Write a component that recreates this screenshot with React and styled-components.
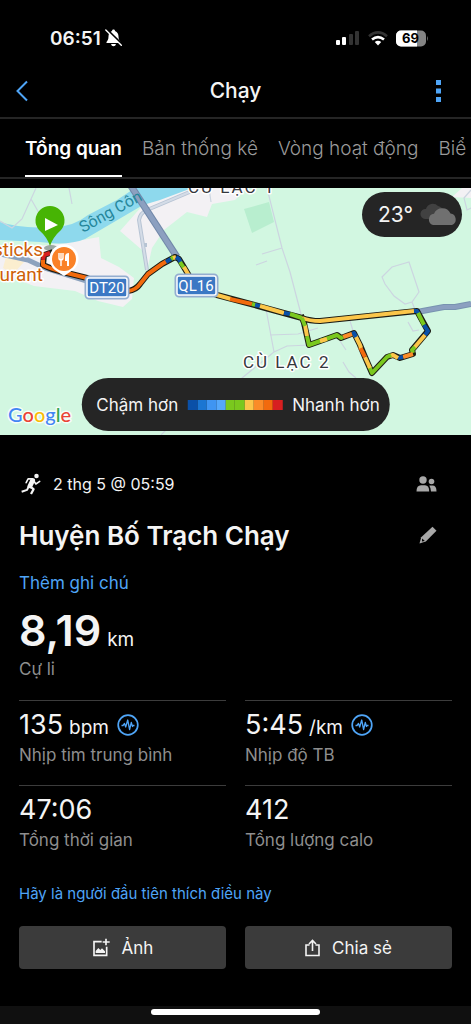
import { useState } from "react"
import styled, { createGlobalStyle } from "styled-components"

const GlobalStyle = createGlobalStyle`
  * {
    box-sizing: border-box;
  }
  body {
    margin: 0;
    background-color: #000;
    color: #f4f4f4;
    font-family: Inter, "Liberation Sans", sans-serif;
  }
  button {
    font-family: inherit;
    background: none;
    border: none;
    padding: 0;
    color: inherit;
    cursor: pointer;
  }
  h1, h2, p {
    margin: 0;
  }
  svg {
    display: block;
    flex-shrink: 0;
  }
`

const Screen = styled.div`
  display: flex;
  flex-direction: column;
  min-height: 100vh;
  overflow: hidden;
`

const StatusBar = styled.div`
  display: flex;
  justify-content: space-between;
  align-items: center;
  height: 64px;
  padding: 12px 42px 0 50px;
`

const Clock = styled.div`
  display: flex;
  align-items: center;
  gap: 4px;
  font-size: 19px;
  font-weight: 600;
`

const Signals = styled.div`
  display: flex;
  align-items: center;
  gap: 8px;
`

const Header = styled.header`
  display: grid;
  grid-template-columns: 44px 1fr 44px;
  align-items: center;
  height: 55px;
  border-bottom: 2px solid #252525;

  h1 {
    text-align: center;
    font-size: 21px;
    font-weight: 500;
  }
`

const IconButton = styled.button`
  display: flex;
  justify-content: ${(props) => props.$align || "center"};
  align-items: center;
  padding: ${(props) => props.$pad || "0"};
`

const Tabs = styled.nav`
  display: flex;
  gap: 20px;
  height: 60px;
  padding-left: 25px;
  margin-bottom: 9px;
  border-bottom: 2px solid #252525;
  overflow: hidden;
`

const Tab = styled.button`
  && {
    flex-shrink: 0;
    padding-top: 2px;
    font-size: 19px;
    white-space: nowrap;
    font-weight: ${(props) => (props.$active ? 600 : 300)};
    color: ${(props) => (props.$active ? "#fff" : "#9a9a9a")};
    border-bottom: 2px solid ${(props) => (props.$active ? "#fff" : "transparent")};
  }
`

const MapBox = styled.section`
  position: relative;
  height: 247px;
  background-color: #d2f7e1;

  > svg {
    width: 100%;
    height: 100%;
  }
`

const Weather = styled.div`
  position: absolute;
  top: 4px;
  right: 9px;
  display: flex;
  align-items: center;
  gap: 7px;
  height: 45px;
  padding: 0 4px 0 16px;
  border-radius: 23px;
  background-color: #252525;
  font-size: 21px;
`

const Legend = styled.div`
  position: absolute;
  bottom: 4px;
  left: 50%;
  transform: translateX(-50%);
  display: flex;
  align-items: center;
  gap: 10px;
  height: 53px;
  padding: 0 10px 0 15px;
  border-radius: 27px;
  background-color: #252525;
  font-size: 17px;
  white-space: nowrap;
`

const Scale = styled.div`
  display: flex;
  width: 94px;
  height: 10px;
`

const Step = styled.span`
  flex: 1;
  background-color: ${(props) => props.$color};
`

const Content = styled.main`
  padding: 34px 19px 37px;
`

const Row = styled.div`
  display: flex;
  align-items: center;
  justify-content: space-between;
  height: ${(props) => props.$height}px;
  padding-right: 15px;

  h2 {
    font-size: 26px;
    font-weight: 600;
  }
`

const DateLine = styled.div`
  display: flex;
  align-items: center;
  gap: 12px;
  padding-left: 2px;
  font-size: 16px;
`

const TextLink = styled.a`
  display: block;
  width: fit-content;
  font-size: ${(props) => props.$size}px;
  line-height: 24px;
  color: #4fa5f7;
  text-decoration: none;
`

const Distance = styled.div`
  display: flex;
  align-items: baseline;
  gap: 6px;
  margin-top: 9px;
  font-size: 43px;
  font-weight: 600;
  line-height: 52px;

  span {
    font-size: 19px;
    font-weight: 400;
    line-height: 1;
  }
`

const Label = styled.p`
  font-size: 17px;
  line-height: 26px;
  color: #8e8e8e;
`

const Stats = styled.div`
  display: grid;
  grid-template-columns: 1fr 1fr;
  column-gap: 19px;
  margin: 18px 0 12px;
`

const Stat = styled.div`
  height: 85px;
  padding-top: 6px;
  border-top: 1px solid #3c3c3c;
`

const Value = styled.div`
  display: flex;
  align-items: center;
  gap: 8px;
  line-height: 35px;

  p {
    display: flex;
    align-items: baseline;
    gap: 6px;
    font-size: 27px;
  }
  span {
    font-size: 19px;
    line-height: 1;
  }
`

const Actions = styled.div`
  display: grid;
  grid-template-columns: 1fr 1fr;
  column-gap: 19px;
  margin-top: 20px;
`

const ActionButton = styled.button`
  && {
    display: flex;
    justify-content: center;
    align-items: center;
    gap: 12px;
    height: 43px;
    border-radius: 4px;
    background-color: #3b3b3b;
    font-size: 17px;
  }
`

const HomeArea = styled.footer`
  display: flex;
  justify-content: center;
  height: 18px;
  margin-top: auto;
  padding-top: 3px;
  background-color: #101010;
`

const HomeBar = styled.div`
  width: 36%;
  height: 6px;
  border-radius: 3px;
  background-color: #fff;
`

const BLUE = "#4fa5f7"

const BellOff = () => (
  <svg width="17" height="18" viewBox="0 0 17 18">
    <path d="M8.500 .5C9.500 .5 10 1.200 10 2C12.500 3 13.500 5 13.500 7.500C13.500 10.500 14.500 11.500 15.500 13V14H1.500V13C2.500 11.500 3.500 10.500 3.500 7.500C3.500 5 4.500 3 7 2C7 1.200 7.500 .5 8.500 .5ZM6 15H11Q10.500 17.300 8.500 17.300Q6.500 17.300 6 15Z" fill="#fff" />
    <path d="M1.500 .2L17 15.400" stroke="#000" strokeWidth="2.200" />
    <path d="M.8 1L16.300 16.200" stroke="#fff" strokeWidth="1.400" strokeLinecap="round" />
  </svg>
)

const SignalBars = () => (
  <svg width="24" height="16" viewBox="0 0 24 16">
    <rect x="0" y="10" width="4" height="5" rx="1" fill="#fff" />
    <rect x="6" y="7" width="4" height="8" rx="1" fill="#fff" />
    <rect x="13" y="4" width="4" height="11" rx="1" fill="#333" />
    <rect x="19" y="1" width="4" height="14" rx="1" fill="#333" />
  </svg>
)

const Wifi = () => (
  <svg width="20" height="15" viewBox="0 0 20 15" fill="none" strokeWidth="2.600">
    <path d="M1 5.200Q10 -2.400 19 5.200" stroke="#333" />
    <path d="M4 8.600Q10 3.600 16 8.600" stroke="#fff" />
    <path d="M6.800 11Q10 8.600 13.200 11L10 14.400Z" fill="#fff" />
  </svg>
)

const Battery = () => (
  <svg width="33" height="17" viewBox="0 0 33 17">
    <defs>
      <clipPath id="cell">
        <rect width="30" height="16" y=".5" rx="5" />
      </clipPath>
    </defs>
    <g clipPath="url(#cell)">
      <rect width="30" height="17" fill="#848484" />
      <rect width="21" height="17" fill="#fff" />
    </g>
    <path d="M31 6Q33 8.500 31 11Z" fill="#666" />
    <text x="14.500" y="13.200" fontSize="13" fontWeight="700" textAnchor="middle" fill="#000">69</text>
  </svg>
)

const Runner = () => (
  <svg width="20" height="22" viewBox="64 40 62 66" fill="none" stroke="#f4f4f4" strokeLinejoin="round">
    <circle cx="112" cy="48" r="7" fill="#f4f4f4" stroke="none" />
    <path d="M100 62L92 79" strokeWidth="15" strokeLinecap="round" />
    <path d="M99 57L86 57L80 69" strokeWidth="5" strokeLinecap="round" />
    <path d="M103 62L110 73L122 65" strokeWidth="5" strokeLinecap="round" />
    <path d="M88 80L83 91L66 97" strokeWidth="6" />
    <path d="M91 80L103 89L95 104" strokeWidth="7" />
  </svg>
)

const People = () => (
  <svg width="21" height="16" viewBox="0 0 21 16" fill="#a8a8a8">
    <circle cx="7" cy="4" r="3.700" />
    <path d="M.5 15.500Q.5 9.200 5 9.200H9Q13.200 9.200 13.200 15.500Z" />
    <circle cx="15.500" cy="5.500" r="2.800" />
    <path d="M13.300 9.600Q14.800 12 15 15.500H20.500Q20.500 9.600 16.500 9.600Z" />
  </svg>
)

const Pencil = () => (
  <svg width="18" height="18" viewBox="0 0 18 18">
    <path d="M.5 17.500L2.200 11.200L13.500 .7L17.500 4.700L6.800 15.600Z" fill="#a8a8a8" />
    <path d="M3.200 12.400L5.800 15L2.900 15.600Z" fill="#000" />
  </svg>
)

const Pulse = () => (
  <svg width="22" height="22" viewBox="0 0 22 22" fill="none" stroke={BLUE} strokeLinejoin="round">
    <circle cx="11" cy="11" r="9.800" strokeWidth="1.700" />
    <path d="M4.500 11.500H6L7.500 9.500L8.700 13L10.700 6L12.600 15.500L14.300 8.500L15.500 12.500L16 11.500H17.500" strokeWidth="1.300" />
  </svg>
)

const AddPhoto = () => (
  <svg width="18" height="19" viewBox="280 204 54 57" fill="none" stroke="#f4f4f4" strokeWidth="5">
    <path d="M309 215H286V256H324V230" />
    <path d="M322 206V226M312 216H333" />
    <path d="M291 249V243L299 234L305 240L310 235L319 244V249Z" fill="#f4f4f4" stroke="none" />
  </svg>
)

const Share = () => (
  <svg width="15" height="18" viewBox="0 0 15 18" fill="none" stroke="#f4f4f4" strokeWidth="1.600">
    <path d="M4.500 6H1V16.500H14V6H10.500" />
    <path d="M7.500 12V2M4 5L7.500 1.500L11 5" />
  </svg>
)

const Clouds = () => (
  <svg width="38" height="24" viewBox="0 0 38 24">
    <path d="M5 16A5 5 0 0 1 6 6A7 7 0 0 1 18 3A6 6 0 0 1 23 9L18 16Z" fill="#414141" />
    <path d="M13 22A5.800 5.800 0 0 1 14 10.700A9 9 0 0 1 30.500 10.500A6 6 0 0 1 32 22Z" fill="#707070" />
  </svg>
)

const ORANGE = "#f26a0d"
const AMBER = "#fcc64a"
const TANGERINE = "#fb8c28"
const GREEN = "#7ac81e"
const NAVY = "#0a50a8"
const RED = "#d71f20"

// outline of the run, then the same line again cut up by pace
const track = "M50 65L44 67L43 77Q51 81 63 84L87 90L110 100L128 103Q136 102 140 96L148 86L162 76L175 69L179 71L188 86L196 100L217 107L258 118L302 130Q310 133 320 133L417 123L428 143L412 162L413 166L400 170L393 167L387 169L372 185L365 169L360 157L354 145L341 150L337 147L309 157L304 135L302 130"

const paces = [
  [RED, "M50 65L44 67L43 72"],
  [ORANGE, "M43 72V77Q51 81 63 84L87 90L110 100L128 103Q136 102 140 96L148 86L162 76L167 73"],
  [NAVY, "M166 74L171 71"],
  [GREEN, "M171 71L174 69"],
  [AMBER, "M173 70L176 69"],
  [NAVY, "M176 69L179 71L181 75"],
  [GREEN, "M180 74L184 80"],
  [AMBER, "M184 79L188 86L196 100L217 107L231 111"],
  [ORANGE, "M230 111L252 116"],
  [GREEN, "M252 116L256 117"],
  [NAVY, "M255 117L260 118"],
  [AMBER, "M260 118L284 125"],
  [NAVY, "M284 125L290 126"],
  [GREEN, "M290 126L302 130"],
  [AMBER, "M302 130Q310 133 320 133L414 123"],
  [NAVY, "M414 123H417L419 126"],
  [GREEN, "M418 125L424 137"],
  [NAVY, "M424 137L428 143L425 147"],
  [AMBER, "M425 147L414 160"],
  [GREEN, "M415 159L412 162L413 165"],
  [TANGERINE, "M413 166L403 169"],
  [NAVY, "M403 169L398 170"],
  [AMBER, "M398 170L393 167L390 168"],
  [GREEN, "M391 167L387 169L372 185L369 178"],
  [AMBER, "M370 180L365 169"],
  [ORANGE, "M365 169L360 159"],
  [AMBER, "M361 160L360 157L355 147"],
  [NAVY, "M356 149L354 145L352 146"],
  [TANGERINE, "M352 146L343 149"],
  [GREEN, "M343 149L341 150L337 147L309 157L307 148"],
  [AMBER, "M327 151L320 153"],
  [AMBER, "M307 148L305 137"],
  [GREEN, "M305 138L302 130"],
]

const RouteMap = () => (
  <svg viewBox="0 0 471 247" preserveAspectRatio="xMidYMid slice" fontFamily="Roboto, sans-serif">
    <rect width="471" height="247" fill="#d2f7e1" />
    <path d="M0 62L66 55L99 49L101 70L119 79L134 90L132 111L123 119L98 113L75 103L34 98L0 85Z" fill="#f3f1f4" />
    <path d="M120 43L143 17L192 0H247L235 12L212 16L207 29L187 24L164 42L152 60L148 78L142 62Z" fill="#f3f1f4" />
    <path d="M452 9L462 0H471V10Z" fill="#f3f1f4" />
    <path d="M0 34Q22 41 50 39Q72 40 88 27L117 12L135 0H192L160 12L143 17L85 51Q68 58 40 54L0 52Z" fill="#8ed9ed" />
    <path d="M244 21L269 14L274 34L252 45Z" fill="#b8eecf" />
    <path d="M6 69L24 74L13 86L3 80Z" fill="#fbeecf" />
    <g fill="none" stroke="#ccd5e0" strokeWidth="1.200">
      <path d="M36 0L22 31L12 40L0 33M31 11L39 25M69 0L72 16M209 0L211 14" />
      <path d="M267 0L282 60L290 84L302 130M262 66L282 60M256 77L267 73" />
      <path d="M382 89L392 79L409 74L419 104L412 114L405 116L394 108L385 96ZM412 114L416 124" />
      <path d="M471 2L464 10L467 22L471 20M266 121L274 164L242 190L215 209M270 147L298 146L318 140M274 164L287 158L310 157M350 133L354 146M408 134L413 143L419 142M343 174L349 184L356 190M340 153L346 162M161 247L168 240" />
    </g>
    <g fill="none" strokeLinejoin="round">
      <path d="M192 3L147 22Q140 25 139 32L147 82M143 57H147" stroke="#b7c4d4" strokeWidth="4" />
      <path d="M192 3L147 22Q140 25 139 32L147 82" stroke="#d4dce7" strokeWidth="2" />
      <path d="M0 66L28 72L45 80L90 94" stroke="#8ca2bd" strokeWidth="5" />
      <path d="M131 -2L177 69" stroke="#7188a9" strokeWidth="7" />
      <path d="M131 -2L177 69" stroke="#8ca0c0" strokeWidth="5" />
      <path d="M417 124L444 119H455L471 116" stroke="#7893b0" strokeWidth="6" />
      <path d="M417 124L444 119H455L471 116" stroke="#8ca0c0" strokeWidth="4" />
    </g>
    <text x="83" y="45" fontSize="16" fill="#25869b" transform="rotate(-29 83 45)">Sông Côn</text>
    <g fontSize="17" fill="#35373c" stroke="#fff" strokeWidth="3" paintOrder="stroke" strokeLinejoin="round">
      <text x="188" y="5" letterSpacing="2">CÙ LẠC 1</text>
      <text x="243" y="180" letterSpacing="2">CÙ LẠC 2</text>
    </g>
    <ellipse cx="51" cy="60" rx="7" ry="3" fill="#62766b" opacity=".6" />
    <g fill="none" strokeLinejoin="round">
      <path d={track} stroke="#1c1c14" strokeWidth="6" strokeLinecap="square" />
      {paces.map(([color, d], i) => <path key={i} d={d} stroke={color} strokeWidth="4" />)}
    </g>
    <g fontSize="19" fill="#ce6108" stroke="#fff" strokeWidth="3" paintOrder="stroke" strokeLinejoin="round" textAnchor="end">
      <text x="43" y="68">sticks</text>
      <text x="43" y="93">urant</text>
    </g>
    <path d="M50 58Q47 49 39 42A14.500 14.500 0 1 1 61 42Q53 49 50 58Z" fill="#47b404" />
    <path d="M45 30L58 37L45 43Z" fill="#fff" />
    <path d="M64 88L58 84A14.500 14.500 0 1 1 70 84Z" fill="#fff" />
    <circle cx="64" cy="71" r="12" fill="#fa8127" />
    <path d="M59 65V70Q59 72 61 72T63 70V65M61 65V78" fill="none" stroke="#fff" strokeWidth="1.400" />
    <path d="M65 69Q65 65 69 65V78H67V73H65Z" fill="#fff" />
    <g fill="#3b78c4" stroke="#fff" strokeWidth="1.500" fontSize="15">
      <rect x="86" y="89" width="42" height="21" rx="3" stroke="#94aed0" strokeWidth="3" />
      <rect x="87" y="90" width="40" height="19" rx="2" />
      <rect x="176" y="87" width="41" height="21" rx="3" stroke="#94aed0" strokeWidth="3" />
      <rect x="177" y="88" width="39" height="19" rx="2" />
      <g fill="#fff" stroke="none" textAnchor="middle">
        <text x="107" y="105">DT20</text>
        <text x="196" y="103">QL16</text>
      </g>
    </g>
    <g fontSize="20" fontWeight="500" fontFamily="Lato, sans-serif" stroke="#fff" strokeWidth="3" strokeOpacity=".8" paintOrder="stroke" strokeLinejoin="round">
      <text x="8" y="234">
        <tspan fill="#4285f4">G</tspan>
        <tspan fill="#ea4335">o</tspan>
        <tspan fill="#fbbc05">o</tspan>
        <tspan fill="#4285f4">g</tspan>
        <tspan fill="#34a853">l</tspan>
        <tspan fill="#ea4335">e</tspan>
      </text>
    </g>
  </svg>
)

const tabs = ["Tổng quan", "Bản thống kê", "Vòng hoạt động", "Biể"]

const scale = [NAVY, "#1b76d2", "#3f95f2", "#55a8fb", GREEN, GREEN, AMBER, TANGERINE, ORANGE, RED]

const stats = [
  { value: "135", unit: "bpm", label: "Nhịp tim trung bình", chart: true },
  { value: "5:45", unit: "/km", label: "Nhịp độ TB", chart: true },
  { value: "47:06", label: "Tổng thời gian" },
  { value: "412", label: "Tổng lượng calo" },
]

export default function App() {
  const [active, setActive] = useState(0)

  return (
    <Screen>
      <GlobalStyle />
      <StatusBar>
        <Clock>06:51<BellOff /></Clock>
        <Signals>
          <SignalBars />
          <Wifi />
          <Battery />
        </Signals>
      </StatusBar>
      <Header>
        <IconButton aria-label="Quay lại">
          <svg width="14" height="22" viewBox="0 0 14 22" fill="none" stroke={BLUE} strokeWidth="2">
            <path d="M12 1.500L2.500 11L12 20.500" />
          </svg>
        </IconButton>
        <h1>Chạy</h1>
        <IconButton aria-label="Tùy chọn" $align="flex-start" $pad="0 0 0 9px">
          <svg width="5" height="22" viewBox="0 0 5 22" fill={BLUE}>
            <path d="M0 0H5V5H0ZM0 8.500H5V13.500H0ZM0 17H5V22H0Z" />
          </svg>
        </IconButton>
      </Header>
      <Tabs>
        {tabs.map((tab, index) => (
          <Tab key={tab} $active={index === active} onClick={() => setActive(index)}>{tab}</Tab>
        ))}
      </Tabs>
      <MapBox>
        <RouteMap />
        <Weather>23°<Clouds /></Weather>
        <Legend>
          Chậm hơn
          <Scale>{scale.map((color, index) => <Step key={index} $color={color} />)}</Scale>
          Nhanh hơn
        </Legend>
      </MapBox>
      <Content>
        <Row $height={30}>
          <DateLine><Runner />2 thg 5 @ 05:59</DateLine>
          <IconButton aria-label="Quyền riêng tư"><People /></IconButton>
        </Row>
        <Row $height={72}>
          <h2>Huyện Bố Trạch Chạy</h2>
          <IconButton aria-label="Sửa tên"><Pencil /></IconButton>
        </Row>
        <TextLink href="#note" $size={17}>Thêm ghi chú</TextLink>
        <Distance>8,19<span>km</span></Distance>
        <Label>Cự li</Label>
        <Stats>
          {stats.map((stat) => (
            <Stat key={stat.label}>
              <Value>
                <p>{stat.value}{stat.unit && <span>{stat.unit}</span>}</p>
                {stat.chart && <Pulse />}
              </Value>
              <Label>{stat.label}</Label>
            </Stat>
          ))}
        </Stats>
        <TextLink href="#like" $size={15}>Hãy là người đầu tiên thích điều này</TextLink>
        <Actions>
          <ActionButton><AddPhoto />Ảnh</ActionButton>
          <ActionButton><Share />Chia sẻ</ActionButton>
        </Actions>
      </Content>
      <HomeArea><HomeBar /></HomeArea>
    </Screen>
  )
}
